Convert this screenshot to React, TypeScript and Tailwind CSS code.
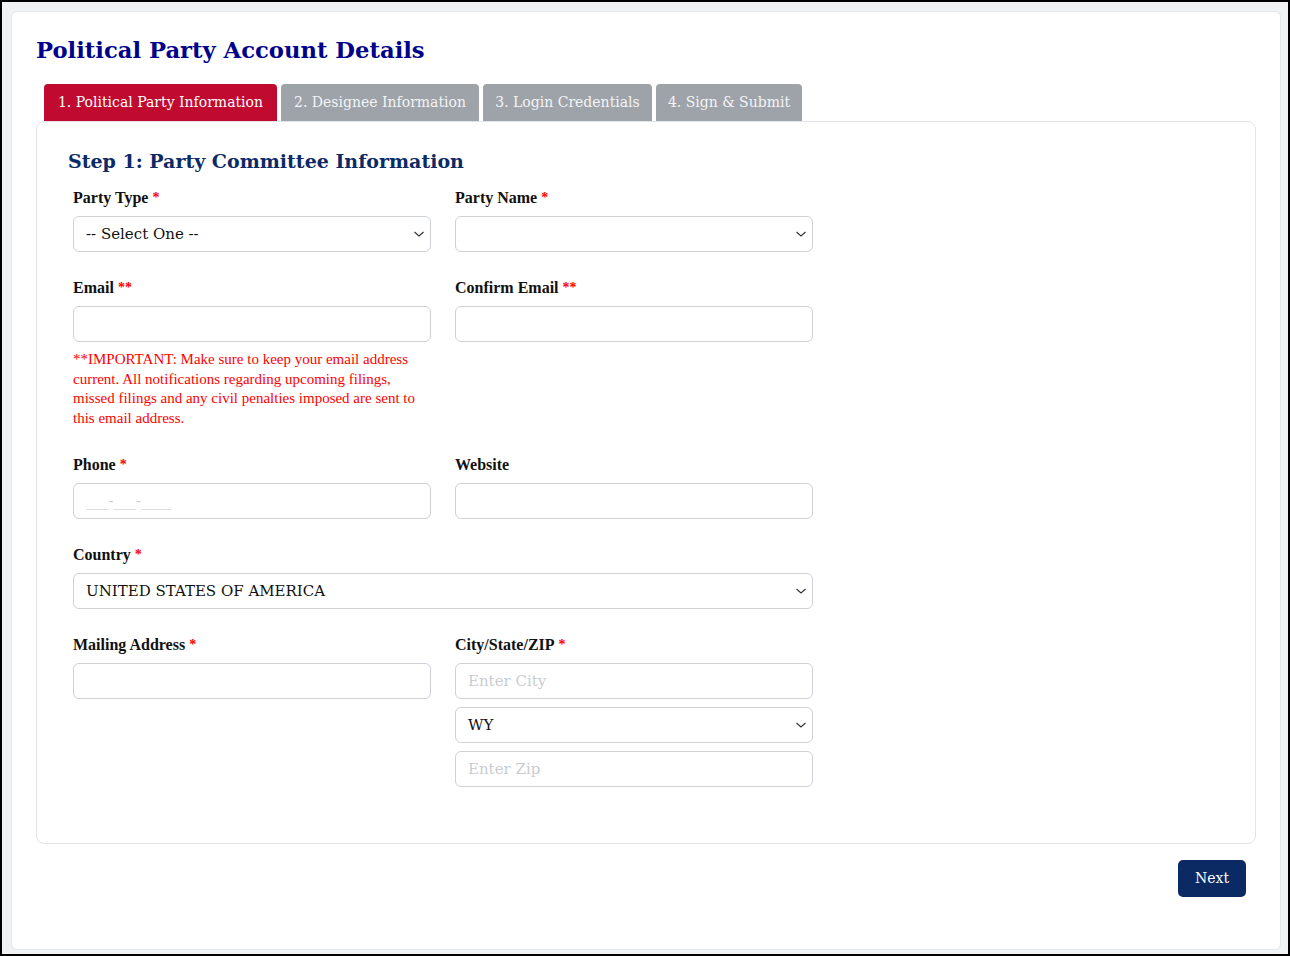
import React from 'react'

const serif = { fontFamily: '"Liberation Serif", "DejaVu Serif", serif' }
const wide = { fontFamily: '"DejaVu Serif", "Liberation Serif", serif' }

const Req = ({ double }: { double?: boolean }) => (
    <span className="text-[#ff0000] text-[14px] ml-[4px] align-top">{double ? '**' : '*'}</span>
)

const Label = ({ text, req, double }: { text: string; req?: boolean; double?: boolean }) => (
    <label className="block text-[16px] leading-[22px] font-bold text-[#111] pt-[1px] mb-[7px]">
        {text}
        {req && <Req double={double} />}
    </label>
)

const inputCls =
    'block w-full h-[36px] rounded-[6px] border border-[#cdd1d6] bg-white px-[12px] text-[15px] text-[#111] placeholder:text-[#c9ccd1] outline-none'

const Chevron = () => (
    <svg className="absolute right-[6px] top-1/2 -translate-y-1/2 pointer-events-none" width="12" height="8" viewBox="0 0 12 8">
        <path d="M1.5 2 L6 6 L10.5 2" fill="none" stroke="#333" strokeWidth="1.1" />
    </svg>
)

const Select = ({ value }: { value: string }) => (
    <div className="relative">
        <div className={inputCls + ' flex items-center'} style={wide}>{value}</div>
        <Chevron />
    </div>
)

const Input = ({ placeholder }: { placeholder?: string }) => (
    <input className={inputCls} placeholder={placeholder} style={wide} />
)

const tabs = [
    { label: '1. Political Party Information', w: 'w-[233px]', active: true },
    { label: '2. Designee Information', w: 'w-[198px]', active: false },
    { label: '3. Login Credentials', w: 'w-[169px]', active: false },
    { label: '4. Sign & Submit', w: 'w-[146px]', active: false },
]

const App = () => {
    return (
        <div className="h-[956px] w-full border-2 border-black bg-[#f1f2f4] pt-[9px] pl-[9px] pr-[7px] pb-[4px] flex" style={serif}>
            <div className="flex-1 bg-white border border-[#e4e6ea] rounded-[6px] px-[24px] pt-[22px]">
                <h1 className="text-[22.7px] leading-[32px] font-bold text-[#00008b]" style={wide}>Political Party Account Details</h1>

                <div className="flex gap-[4px] ml-[8px] mt-[18px]">
                    {tabs.map((t) => (
                        <div
                            key={t.label}
                            style={wide}
                            className={`${t.w} h-[37px] rounded-t-[4px] flex items-center justify-center text-[14px] ${t.active ? 'bg-[#c10a30] text-white' : 'bg-[#9ea3a9] text-[#f3f4f6]'}`}
                        >
                            {t.label}
                        </div>
                    ))}
                </div>

                <div className="border border-[#e2e4e8] rounded-[8px] pl-[31px] pr-8 pt-[25px] pb-[56px]">
                    <h2 className="text-[19px] leading-[28px] font-bold text-[#0c2a66]" style={wide}>Step 1: Party Committee Information</h2>

                    <div className="w-[740px] ml-[5px] mt-[11px] grid grid-cols-2 gap-x-[24px] gap-y-[24px]">
                        <div>
                            <Label text="Party Type" req />
                            <Select value="-- Select One --" />
                        </div>
                        <div>
                            <Label text="Party Name" req />
                            <Select value="" />
                        </div>

                        <div>
                            <Label text="Email" req double />
                            <Input />
                            <p className="mt-[8px] pb-[1px] text-[15px] leading-[19.5px] text-[#ff0000]">
                                **IMPORTANT: Make sure to keep your email address current. All notifications regarding upcoming filings, missed filings and any civil penalties imposed are sent to this email address.
                            </p>
                        </div>
                        <div>
                            <Label text="Confirm Email" req double />
                            <Input />
                        </div>

                        <div>
                            <Label text="Phone" req />
                            <Input placeholder="___-___-____" />
                        </div>
                        <div>
                            <Label text="Website" />
                            <Input />
                        </div>

                        <div className="col-span-2">
                            <Label text="Country" req />
                            <Select value="UNITED STATES OF AMERICA" />
                        </div>

                        <div>
                            <Label text="Mailing Address" req />
                            <Input />
                        </div>
                        <div>
                            <Label text="City/State/ZIP" req />
                            <div className="flex flex-col gap-[8px]">
                                <Input placeholder="Enter City" />
                                <Select value="WY" />
                                <Input placeholder="Enter Zip" />
                            </div>
                        </div>
                    </div>
                </div>

                <div className="flex justify-end pr-[10px] mt-[16px]">
                    <button className="w-[68px] h-[37px] rounded-[5px] bg-[#0b2a63] text-white text-[14px]" style={wide}>Next</button>
                </div>
            </div>
        </div>
    )
}

export default App
